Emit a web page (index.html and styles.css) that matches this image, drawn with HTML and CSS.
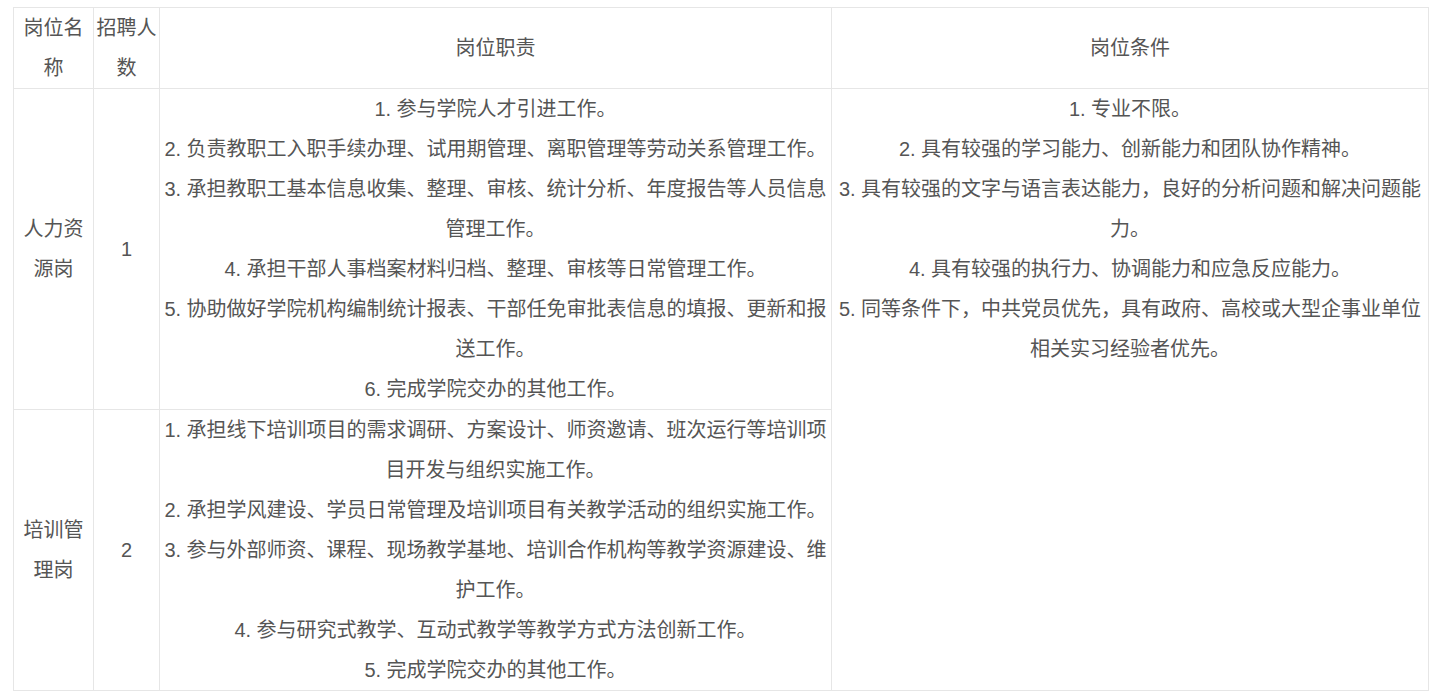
FILE: index.html
```html
<!DOCTYPE html>
<html lang="zh-CN">
<head>
<meta charset="utf-8">
<title>岗位</title>
<link rel="stylesheet" href="styles.css">
</head>
<body>
<div class="wrap">
<table class="jobs">
  <colgroup>
    <col class="c-name">
    <col class="c-num">
    <col class="c-duty">
    <col class="c-cond">
  </colgroup>
  <tbody>
    <tr class="head">
      <td>岗位名称</td>
      <td>招聘人数</td>
      <td>岗位职责</td>
      <td>岗位条件</td>
    </tr>
    <tr>
      <td>人力资源岗</td>
      <td>1</td>
      <td>
        <div>1. 参与学院人才引进工作。</div>
        <div>2. 负责教职工入职手续办理、试用期管理、离职管理等劳动关系管理工作。</div>
        <div>3. 承担教职工基本信息收集、整理、审核、统计分析、年度报告等人员信息管理工作。</div>
        <div>4. 承担干部人事档案材料归档、整理、审核等日常管理工作。</div>
        <div>5. 协助做好学院机构编制统计报表、干部任免审批表信息的填报、更新和报送工作。</div>
        <div>6. 完成学院交办的其他工作。</div>
      </td>
      <td rowspan="2" class="top">
        <div>1. 专业不限。</div>
        <div>2. 具有较强的学习能力、创新能力和团队协作精神。</div>
        <div>3. 具有较强的文字与语言表达能力，良好的分析问题和解决问题能力。</div>
        <div>4. 具有较强的执行力、协调能力和应急反应能力。</div>
        <div>5. 同等条件下，中共党员优先，具有政府、高校或大型企事业单位相关实习经验者优先。</div>
      </td>
    </tr>
    <tr>
      <td>培训管理岗</td>
      <td>2</td>
      <td>
        <div>1. 承担线下培训项目的需求调研、方案设计、师资邀请、班次运行等培训项目开发与组织实施工作。</div>
        <div>2. 承担学风建设、学员日常管理及培训项目有关教学活动的组织实施工作。</div>
        <div>3. 参与外部师资、课程、现场教学基地、培训合作机构等教学资源建设、维护工作。</div>
        <div>4. 参与研究式教学、互动式教学等教学方式方法创新工作。</div>
        <div>5. 完成学院交办的其他工作。</div>
      </td>
    </tr>
  </tbody>
</table>
</div>
</body>
</html>
```
FILE: styles.css
```css
html, body {
  margin: 0;
  padding: 0;
  background: #ffffff;
}

.wrap {
  padding: 7px 0 0 13px;
}

.jobs {
  width: 1415px;
  table-layout: fixed;
  border-collapse: collapse;
  font-family: "Liberation Sans", "Noto Sans CJK SC", sans-serif;
  font-size: 20px;
  line-height: 40px;
  color: #555555;
}

.c-name { width: 80px; }
.c-num { width: 66px; }
.c-duty { width: 672px; }
.c-cond { width: 597px; }

.jobs td {
  border: 1px solid #e6e6e6;
  padding: 0 2px;
  text-align: center;
  vertical-align: middle;
}

.jobs td.top {
  vertical-align: top;
}
```
